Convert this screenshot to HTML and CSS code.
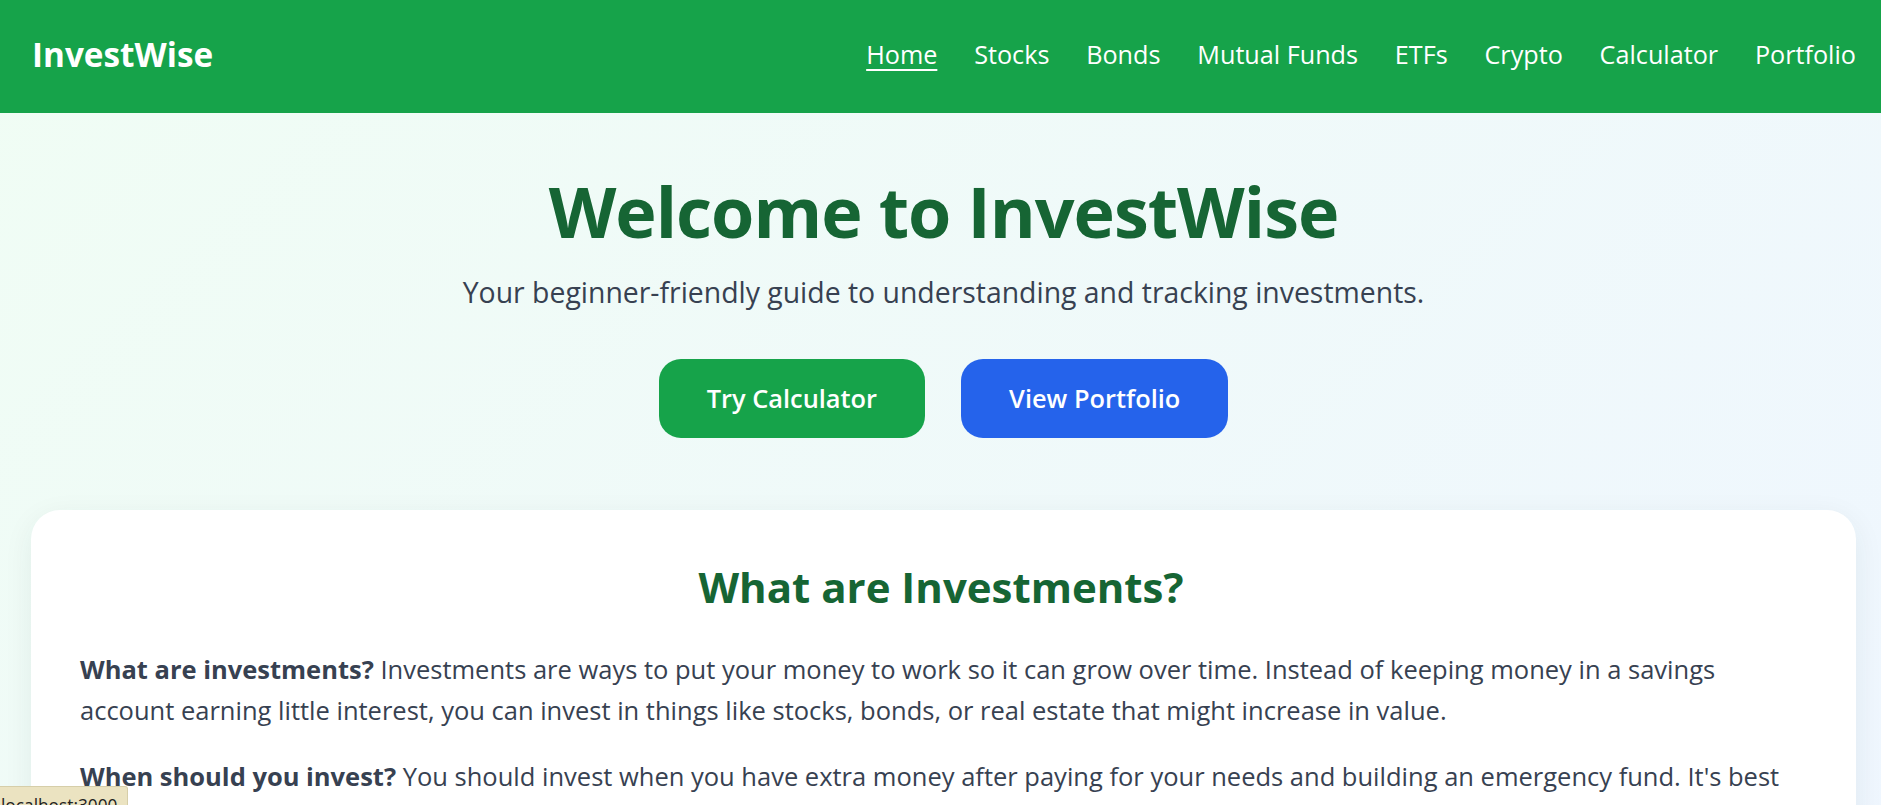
FILE: index.html
```html
<!DOCTYPE html>
<html lang="en">
<head>
<meta charset="utf-8">
<title>InvestWise</title>
<link rel="stylesheet" href="styles.css">
</head>
<body>
<header class="navbar">
  <div class="logo">InvestWise</div>
  <nav class="nav-links">
    <a href="#" class="nav-link active">Home</a>
    <a href="#" class="nav-link">Stocks</a>
    <a href="#" class="nav-link">Bonds</a>
    <a href="#" class="nav-link">Mutual Funds</a>
    <a href="#" class="nav-link">ETFs</a>
    <a href="#" class="nav-link">Crypto</a>
    <a href="#" class="nav-link">Calculator</a>
    <a href="#" class="nav-link">Portfolio</a>
  </nav>
</header>
<main class="page">
  <section class="hero">
    <h1 class="hero-title">Welcome to InvestWise</h1>
    <p class="hero-sub">Your beginner-friendly guide to understanding and tracking investments.</p>
    <div class="hero-actions">
      <a href="#" class="btn btn-green">Try Calculator</a>
      <a href="#" class="btn btn-blue">View Portfolio</a>
    </div>
  </section>
  <section class="card">
    <h2 class="card-title">What are Investments?</h2>
    <p class="card-text"><strong>What are investments?</strong> Investments are ways to put your money to work so it can grow over time. Instead of keeping money in a savings account earning little interest, you can invest in things like stocks, bonds, or real estate that might increase in value.</p>
    <p class="card-text"><strong>When should you invest?</strong> You should invest when you have extra money after paying for your needs and building an emergency fund. It's best to start early so your money has more time to grow.</p>
  </section>
</main>
<div class="status-bar">localhost:3000</div>
</body>
</html>
```

FILE: styles.css
```css
* { box-sizing: border-box; }

html, body {
  margin: 0;
  padding: 0;
}

body {
  font-family: "Open Sans", "Noto Sans", sans-serif;
  color: #374151;
  background: linear-gradient(135deg, #f0fdf4 0%, #eff6ff 100%);
  min-height: 100vh;
}

.navbar {
  height: 113px;
  background: #16a34a;
  display: flex;
  align-items: center;
  justify-content: space-between;
  padding: 0 25px 0 32px;
}

.logo {
  color: #ffffff;
  font-weight: 700;
  font-size: 33.3px;
  line-height: 1;
  padding-bottom: 4px;
}

.nav-links {
  display: flex;
  gap: 36.8px;
  align-items: center;
}

.nav-link {
  color: #ffffff;
  text-decoration: none;
  font-size: 25.2px;
  line-height: 1;
  padding-bottom: 4px;
}

.nav-link.active {
  text-decoration: underline;
  text-underline-offset: 5px;
  text-decoration-thickness: 2px;
}

.page {
  padding: 0 25px 40px 31px;
}

.hero {
  text-align: center;
  padding-top: 56px;
}

.hero-title {
  margin: 0;
  font-size: 70px;
  line-height: 1.2;
  letter-spacing: -1px;
  font-weight: 700;
  color: #166534;
}

.hero-sub {
  margin: 18.5px 0 0;
  font-size: 28.4px;
  line-height: 1.45;
  color: #374151;
}

.hero-actions {
  margin-top: 46px;
  display: flex;
  justify-content: center;
  gap: 36px;
}

.btn {
  display: inline-block;
  color: #ffffff;
  text-decoration: none;
  font-weight: 600;
  font-size: 25.4px;
  line-height: 34px;
  padding: 22.5px 48px;
  border-radius: 22px;
}

.btn-green { background: #16a34a; }
.btn-blue { background: #2563eb; }

.card {
  margin-top: 72px;
  background: #ffffff;
  border-radius: 29px;
  padding: 52px 54px 48px 49px;
  box-shadow: 0 8px 30px rgba(15, 60, 60, 0.07);
}

.card-title {
  margin: 0 0 37px;
  text-align: center;
  font-size: 42px;
  line-height: 1.2;
  font-weight: 700;
  color: #166534;
}

.card-text {
  margin: 0 0 25px;
  font-size: 25.5px;
  line-height: 41px;
  color: #374151;
}

.card-text strong {
  font-weight: 700;
}

.status-bar {
  position: fixed;
  left: 0;
  bottom: -16px;
  height: 35px;
  padding: 6px 10px 0 1px;
  background: #ebe3c1;
  border: 1px solid #d6cea9;
  border-left: none;
  border-radius: 0 3px 0 0;
  font-family: "Open Sans", sans-serif;
  font-size: 17.3px;
  line-height: 25px;
  color: #222;
}
```
